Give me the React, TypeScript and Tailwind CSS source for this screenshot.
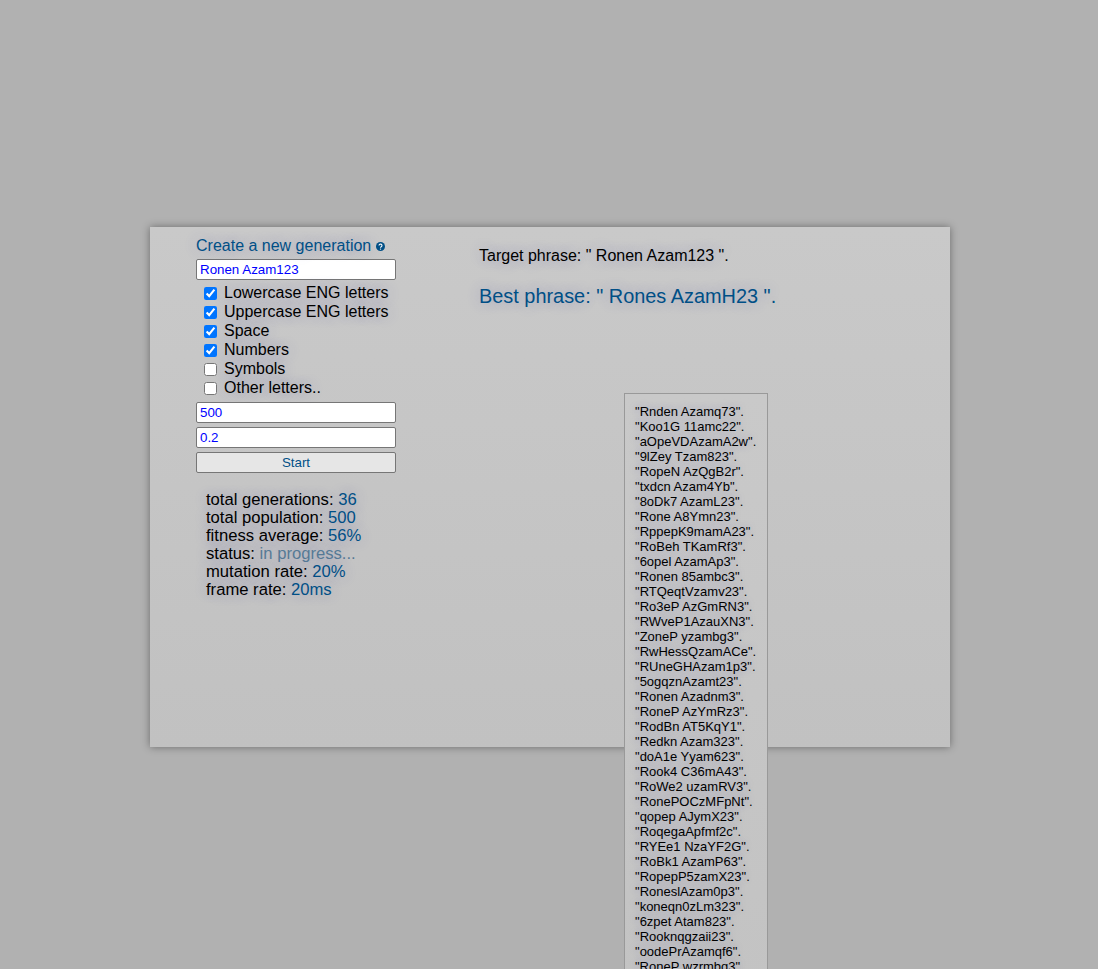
const phrases = [
  "Rnden Azamq73","Koo1G 11amc22","aOpeVDAzamA2w","9lZey Tzam823","RopeN AzQgB2r","txdcn Azam4Yb","8oDk7 AzamL23","Rone A8Ymn23","RppepK9mamA23","RoBeh TKamRf3","6opel AzamAp3","Ronen 85ambc3","RTQeqtVzamv23","Ro3eP AzGmRN3","RWveP1AzauXN3","ZoneP yzambg3","RwHessQzamACe","RUneGHAzam1p3","5ogqznAzamt23","Ronen Azadnm3","RoneP AzYmRz3","RodBn AT5KqY1","Redkn Azam323","doA1e Yyam623","Rook4 C36mA43","RoWe2 uzamRV3","RonePOCzMFpNt","qopep AJymX23","RoqegaApfmf2c","RYEe1 NzaYF2G","RoBk1 AzamP63","RopepP5zamX23","RoneslAzam0p3","koneqn0zLm323","6zpet Atam823","Rooknqgzaii23","oodePrAzamqf6",
];
const checks: [string, boolean][] = [["Lowercase ENG letters",true],["Uppercase ENG letters",true],["Space",true],["Numbers",true],["Symbols",false],["Other letters..",false]];
const stats: [string,string,string][] = [["total generations: ","36","text-[#004f86]"],["total population: ","500","text-[#004f86]"],["fitness average: ","56%","text-[#004f86]"],["status: ","in progress...","text-[#567a96]"],["mutation rate: ","20%","text-[#004f86]"],["frame rate: ","20ms","text-[#004f86]"]];
const inputCls = "block w-[200px] h-[21px] bg-white border border-[#767676] rounded-[2px] px-[3px] text-[13.33px] text-[#0000ff] font-['Liberation_Sans',Arial,sans-serif] outline-none";
const halo = "[text-shadow:0_0_14px_rgba(70,70,170,0.32)]";
export default function App() {
  return (
    <div className="h-[969px] overflow-hidden bg-[#b1b1b1] pt-[227px] font-['Liberation_Sans',Arial,sans-serif] text-black">
      <div className="ml-[150px] flex h-[520px] w-[800px] bg-gradient-to-b from-[#c9c9c9] to-[#c1c1c1] shadow-[0_0_8px_rgba(0,0,0,0.4)]">
        <div className="w-[329px] shrink-0 pl-[46px] pt-[9px]">
          <div className={`flex h-[19px] items-center text-[16px] leading-[19px] text-[#004f86] ${halo}`}>
            Create a new generation
            <svg viewBox="0 0 16 16" className="ml-[5px] mt-[1px] h-[9px] w-[9px]"><circle cx="8" cy="8" r="8" fill="#004f86"/><path d="M5.4 6.2a2.6 2.4 0 1 1 3.9 2.1c-.9.5-1.3.9-1.3 1.7" fill="none" stroke="#fff" strokeWidth="2"/><circle cx="8" cy="12.6" r="1.2" fill="#fff"/></svg>
          </div>
          <input readOnly value="Ronen Azam123" className={`${inputCls} mt-[4px]`} />
          <div className={`mt-[3px] flex flex-col text-[16px] leading-[19px] ${halo}`}>
            {checks.map(([l, c]) => (
              <label key={l} className="flex h-[19px] items-center pl-[8px]">
                <input type="checkbox" readOnly checked={c} className="mt-[1px] h-[13px] w-[13px] shrink-0 accent-[#0075ff]" />
                <span className="ml-[7px]">{l}</span>
              </label>
            ))}
          </div>
          <input readOnly value="500" className={`${inputCls} mt-[5px]`} />
          <input readOnly value="0.2" className={`${inputCls} mt-[4px]`} />
          <button className="mt-[4px] block h-[21px] w-[200px] rounded-[2px] border border-[#767676] bg-[#e6e6e6] text-center text-[13.33px] leading-[15px] text-[#004f86]">Start</button>
          <div className={`ml-[10px] mt-[18px] text-[16.64px] leading-[18px] ${halo}`}>
            {stats.map(([k, v, c]) => (
              <div key={k}>{k}<span className={c}>{v}</span></div>
            ))}
          </div>
        </div>
        <div className="flex flex-col">
          <div className={`mt-[20px] text-[16px] leading-[18px] ${halo}`}>Target phrase: " Ronen Azam123 ".</div>
          <div className={`mt-[20px] text-[19.9px] leading-[23px] text-[#004f86] ${halo}`}>Best phrase: " Rones AzamH23 ".</div>
          <div className="ml-[145px] mt-[85px] h-[600px] w-[144px] shrink-0 border border-[#999] bg-gradient-to-b from-[#c9c9c9] to-[#c3c3c3] px-[10px] pt-[10px] text-[13px] leading-[15px] [text-shadow:0_0_8px_rgba(70,70,170,0.28)]">
            {phrases.map((p, i) => <div key={i} className="whitespace-nowrap">"{p}".</div>)}
            <div className="whitespace-nowrap">"RoneP wzrmbq3".</div>
          </div>
        </div>
      </div>
    </div>
  );
}
